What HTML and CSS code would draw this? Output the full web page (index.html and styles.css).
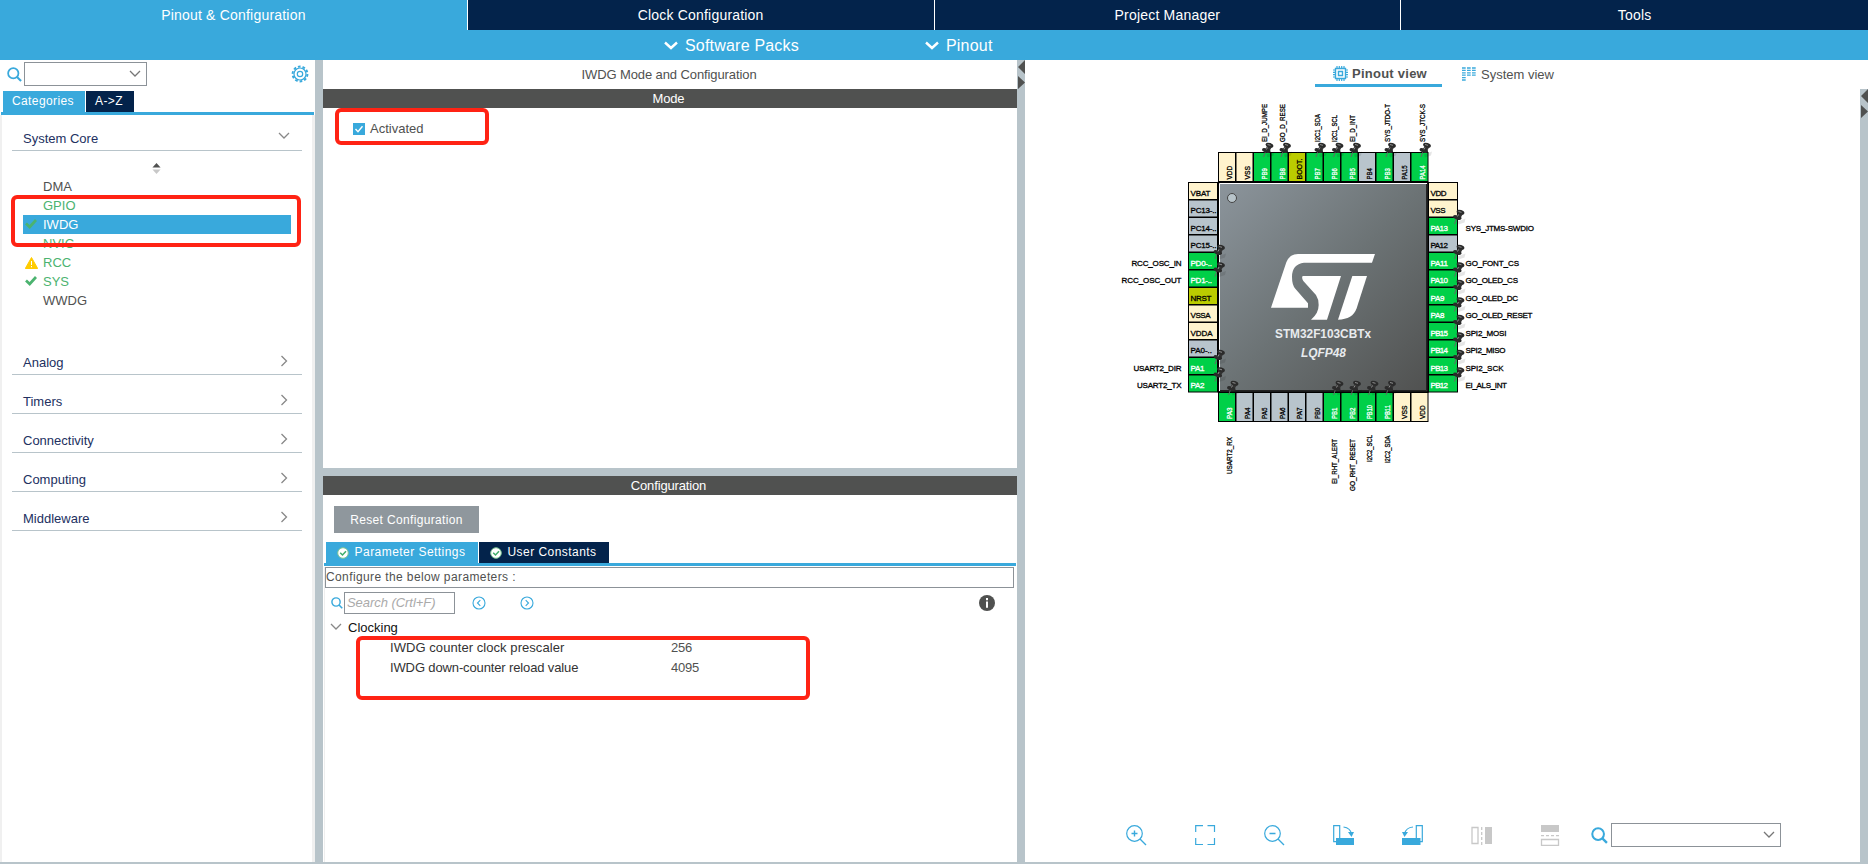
FILE: index.html
```html
<!DOCTYPE html>
<html lang="en">
<head>
<meta charset="utf-8">
<title>Pinout &amp; Configuration</title>
<link rel="stylesheet" href="styles.css">
</head>
<body>
<svg class="defs" width="0" height="0" aria-hidden="true">
  <symbol id="down" viewBox="0 0 12 8"><path d="M1 1l5 5 5-5" fill="none" stroke="currentColor" stroke-width="1.3"/></symbol>
  <symbol id="bold-down" viewBox="0 0 14 9"><path d="M1 1.5l6 5.5 6-5.5" fill="none" stroke="currentColor" stroke-width="2.4"/></symbol>
  <symbol id="right" viewBox="0 0 8 12"><path d="M1.500 1l5 5-5 5" fill="none" stroke="currentColor" stroke-width="1.3"/></symbol>
  <symbol id="search" viewBox="0 0 16 16"><circle cx="6.700" cy="6.700" r="5.500" fill="none" stroke="currentColor" stroke-width="1.900"/><path d="M10.700 10.700L15 15" stroke="currentColor" stroke-width="2.200"/></symbol>
  <symbol id="check" viewBox="0 0 12 10"><path d="M1 4.500l3.700 3.500L11 1" fill="none" stroke="currentColor" stroke-width="2.700"/></symbol>
  <symbol id="ok" viewBox="0 0 12 12"><circle cx="6" cy="6" r="5.300" fill="#fff" stroke="#7cc693" stroke-width="1"/><path d="M3.200 5.700l2.300 2.300 3.500-3.800" fill="none" stroke="#3fae6b" stroke-width="1.500"/></symbol>
  <symbol id="split" viewBox="0 0 8 30"><path d="M8 0v14L1 7zM1 16l7 6.500L1 29z" fill="#505150"/></symbol>
</svg>

<nav class="main-tabs">
  <div class="main-tab active">Pinout &amp; Configuration</div>
  <div class="main-tab">Clock Configuration</div>
  <div class="main-tab">Project Manager</div>
  <div class="main-tab">Tools</div>
</nav>
<div class="menu-bar">
  <span class="menu"><svg width="14" height="9"><use href="#bold-down"/></svg>Software Packs</span>
  <span class="menu"><svg width="14" height="9"><use href="#bold-down"/></svg>Pinout</span>
</div>

<main class="workspace">
  <aside class="sidebar">
    <div class="side-search">
      <svg class="blue" width="15" height="15"><use href="#search"/></svg>
      <div class="combo"><svg width="12" height="8"><use href="#down"/></svg></div>
      <svg class="gear" width="18" height="18" viewBox="-9 -9 18 18"><circle r="7.400" stroke-width="2" stroke-dasharray="2.650 2"/><circle r="6"/><circle r="2.700"/></svg>
    </div>
    <div class="side-tabs"><span class="tab cat">Categories</span><span class="tab az dark">A-&gt;Z</span></div>
    <div class="side-body">
      <div class="group first"><span>System Core</span><svg class="grey" width="12" height="8"><use href="#down"/></svg></div>
      <svg class="sorter" width="9" height="11" viewBox="0 0 10 12"><path d="M5 0l4.500 5h-9z" fill="#505150"/><path d="M5 12L.5 7h9z" fill="#c8c8c8"/></svg>
      <ul class="items">
        <li>DMA</li>
        <li class="on">GPIO</li>
        <li class="selected"><svg class="mark" width="12" height="10"><use href="#check"/></svg>IWDG</li>
        <li class="on">NVIC</li>
        <li class="on"><svg class="mark" width="13" height="12" viewBox="0 0 13 12"><path d="M6.500.5l6.200 11H.3z" fill="#fc0" stroke="#fc0" stroke-linejoin="round"/><path d="M6.500 4v4M6.500 9v1.300" stroke="#fff"/></svg>RCC</li>
        <li class="on"><svg class="mark" width="12" height="10"><use href="#check"/></svg>SYS</li>
        <li>WWDG</li>
      </ul>
      <div class="group"><span>Analog</span><svg class="grey" width="8" height="12"><use href="#right"/></svg></div>
      <div class="group"><span>Timers</span><svg class="grey" width="8" height="12"><use href="#right"/></svg></div>
      <div class="group"><span>Connectivity</span><svg class="grey" width="8" height="12"><use href="#right"/></svg></div>
      <div class="group"><span>Computing</span><svg class="grey" width="8" height="12"><use href="#right"/></svg></div>
      <div class="group"><span>Middleware</span><svg class="grey" width="8" height="12"><use href="#right"/></svg></div>
    </div>
  </aside>
  <div class="splitter"></div>

  <section class="center">
    <div class="mode-panel">
      <h1 class="title">IWDG Mode and Configuration</h1>
      <h2 class="strip">Mode</h2>
      <label class="activated"><svg width="12" height="12" viewBox="0 0 12 12"><path d="M0 0h12v12H0z" fill="#39a9dc"/><path d="M2.500 6l2.500 2.700 4.500-5.400" fill="none" stroke="#fff" stroke-width="1.400"/></svg>Activated</label>
    </div>
    <div class="config-panel">
      <h2 class="strip">Configuration</h2>
      <button class="reset">Reset Configuration</button>
      <div class="config-tabs">
        <span class="tab params"><svg width="12" height="12"><use href="#ok"/></svg>Parameter Settings</span>
        <span class="tab consts dark"><svg width="12" height="12"><use href="#ok"/></svg>User Constants</span>
      </div>
      <div class="config-body">
        <p class="hint">Configure the below parameters :</p>
        <div class="param-search">
          <svg class="blue" width="12" height="12"><use href="#search"/></svg>
          <div class="field">Search (Crtl+F)</div>
          <svg class="step prev" width="14" height="14" viewBox="0 0 14 14"><circle cx="7" cy="7" r="6"/><path d="M8.300 4.200L5.500 7l2.800 2.800"/></svg>
          <svg class="step next" width="14" height="14" viewBox="0 0 14 14"><circle cx="7" cy="7" r="6"/><path d="M5.700 4.200L8.500 7 5.700 9.800"/></svg>
          <svg class="info" width="16" height="16" viewBox="0 0 16 16"><circle cx="8" cy="8" r="8" fill="#505150"/><path d="M8 6.500V12.800M8 3v2.200" fill="none" stroke="#fff" stroke-width="2"/></svg>
        </div>
        <div class="branch"><svg class="grey" width="12" height="8"><use href="#down"/></svg>Clocking</div>
        <div class="param wide"><span>IWDG counter clock prescaler</span><b>256</b></div>
        <div class="param tight"><span>IWDG down-counter reload value</span><b>4095</b></div>
      </div>
    </div>
  </section>
  <div class="splitter"><svg class="arrows" width="8" height="30"><use href="#split"/></svg></div>

  <section class="pinout">
    <div class="view-tabs">
      <span class="view current"><svg width="15" height="15" viewBox="0 0 15 15" fill="none" stroke="#39a9dc"><path d="M2.500 2.500h10v10h-10zM5.500 5.500h4v4h-4z" stroke-width="1.400"/><path d="M4 0v2M6.300 0v2M8.700 0v2M11 0v2M4 13v2M6.300 13v2M8.700 13v2M11 13v2M0 4h2M0 6.300h2M0 8.700h2M0 11h2M13 4h2M13 6.300h2M13 8.700h2M13 11h2" stroke-width="1.200"/></svg>Pinout view</span>
      <span class="view"><svg width="14" height="14" viewBox="0 0 14 14" stroke="#39a9dc" stroke-width="1.300" stroke-dasharray="3.700 1.300"><path d="M0 1h14M0 3.400h14M0 5.800h14M0 8.200h14M0 10.600h4M0 13h4"/></svg>System view</span>
    </div>
    <div class="canvas-row">
      <div class="canvas">
        <svg id="chip" class="chip" viewBox="1025 89 835 711" width="835" height="711"></svg>
        <div class="tools">
          <svg width="21" height="21" viewBox="0 0 21 21"><circle cx="8.500" cy="8.500" r="7.800"/><path d="M14 14l6 6M5.500 8.500h6M8.500 5.500v6" stroke-width="1.400"/></svg>
          <svg width="21" height="21" viewBox="0 0 21 21"><path d="M.7 7V.7H8M12.500.7h7V7M19.500 13v6.500h-7M8 19.500H.7V13"/></svg>
          <svg width="21" height="21" viewBox="0 0 21 21"><circle cx="8.500" cy="8.500" r="7.800"/><path d="M14 14l6 6M5.500 8.500h6" stroke-width="1.400"/></svg>
          <svg width="21" height="21" viewBox="0 0 21 21"><path d="M.7.7h6v16h-6zM10.500 2q7 1 8 7"/><path d="M3 13h18v7H3z" fill="#39a9dc" stroke="none"/><path d="M15 7h6l-2.500 5z" fill="#39a9dc" stroke="none"/></svg>
          <svg width="21" height="21" viewBox="0 0 21 21"><path d="M14.300.7h6v16h-6zM11 2Q4 2.500 2.500 9"/><path d="M0 13h18.500v7H0z" fill="#39a9dc" stroke="none"/><path d="M0 7h6l-3.500 5z" fill="#39a9dc" stroke="none"/></svg>
          <svg class="off" width="21" height="21" viewBox="0 0 21 21"><path d="M1 2.500h6v16H1z"/><path d="M10.700 2v18" stroke-dasharray="3 2"/><path d="M14 2h7v17h-7z" fill="#c8c8c8" stroke="none"/></svg>
          <svg class="off" width="21" height="21" viewBox="0 0 21 21"><path d="M1 0h18v7H1z" fill="#c8c8c8" stroke="none"/><path d="M1 10.700h18" stroke-dasharray="3 2"/><path d="M1.500 14.500h17v6h-17z"/></svg>
          <svg class="blue" width="17" height="17"><use href="#search"/></svg>
          <div class="combo"><svg width="12" height="8"><use href="#down"/></svg></div>
        </div>
      </div>
      <div class="splitter"><svg class="arrows" width="8" height="30"><use href="#split"/></svg></div>
    </div>
  </section>
</main>
<div class="callout c1"></div>
<div class="callout c2"></div>
<div class="callout c3"></div>
<script src="chip.js"></script>
</body>
</html>
```
FILE: styles.css
```css
* { box-sizing: border-box; }
body { margin: 0; width: 1868px; height: 864px; overflow: hidden; display: flex; flex-direction: column; background: #fff; color: #505150; font: 13px/19px "Liberation Sans", Arial, sans-serif; position: relative; border-bottom: 2px solid #b8c4ca; }
svg { display: block; flex: none; }
.defs { position: absolute; }
h1, h2, p, ul { margin: 0; padding: 0; font: inherit; }
.blue { color: #39a9dc; }
.grey { color: #888; }

.main-tabs { display: flex; height: 30px; flex: none; background: #03234b; }
.main-tab { width: 467px; border-right: 1px solid #fff; color: #fff; font-size: 14px; line-height: 30px; letter-spacing: .2px; text-align: center; }
.main-tab:last-child { border: 0; }
.main-tab.active { width: 468px; background: #39a9dc; }
.menu-bar { display: flex; gap: 126px; height: 30px; flex: none; padding-left: 664px; background: #39a9dc; }
.menu { display: flex; align-items: center; gap: 7px; color: #fff; font-size: 16px; letter-spacing: .2px; }

.workspace { display: flex; flex: 1; min-height: 0; }
.splitter { width: 8px; flex: none; background: #b8c4ca; }
.combo { display: flex; align-items: center; justify-content: flex-end; height: 24px; border: 1px solid #8c9298; background: #fff; color: #777; padding-right: 5px; }

.sidebar { width: 315px; flex: none; display: flex; flex-direction: column; }
.side-search { display: flex; align-items: center; height: 31px; padding: 2px 6px 5px 7px; }
.side-search .combo { width: 123px; margin-left: 2px; }
.gear { margin-left: auto; fill: none; stroke: #39a9dc; stroke-width: 1.2; }
.side-tabs, .config-tabs { display: flex; gap: 1px; border-bottom: 3px solid #39a9dc; height: 24px; }
.side-tabs { margin: 0 1px; padding-left: 2px; }
.tab { display: flex; align-items: center; justify-content: center; height: 21px; background: #39a9dc; color: #fff; font-size: 12px; letter-spacing: .4px; }
.dark { background: #03234b; }
.cat { width: 82px; padding-right: 2px; }
.az { width: 48px; padding-right: 2px; }
.side-body { flex: 1; border: solid #f0f0f0; border-width: 0 3px 0 2px; padding: 0 10px; }
.group { display: flex; justify-content: space-between; align-items: center; height: 39px; padding: 14px 14px 0 11px; border-bottom: 1px solid #b8c4ca; color: #22305f; }
.group svg { margin-top: -2px; }
.group.first { height: 36px; padding: 11px 12px 0 11px; }
.group.first svg { margin-top: -5px; }
.sorter { margin: 12px 0 3px 140px; }
.items { list-style: none; margin-bottom: 26px; }
.items li { position: relative; height: 19px; margin: 0 11px; padding-left: 20px; }
.items .on { color: #4bb36f; }
.items .selected { background: #39a9dc; color: #fff; }
.mark { position: absolute; left: 2px; top: 4px; color: #4bb36f; }

.center { width: 694px; flex: none; display: flex; flex-direction: column; }
.mode-panel { height: 416px; flex: none; border-bottom: 8px solid #b8c4ca; }
.title { height: 29px; line-height: 29px; padding-right: 2px; text-align: center; letter-spacing: -.1px; }
.strip { height: 19px; padding-right: 3px; background: #505150; color: #fff; text-align: center; letter-spacing: -.15px; }
.activated { display: flex; align-items: center; gap: 5px; padding: 11px 0 0 30px; }
.config-panel { flex: 1; display: flex; flex-direction: column; align-items: stretch; }
.reset { width: 145px; height: 27px; margin: 11px 0 9px 11px; border: 0; padding: 0; background: #8f979d; color: #fff; font: 12px "Liberation Sans", Arial, sans-serif; letter-spacing: .35px; }
.config-tabs { margin: 0 1px; padding-left: 2px; }
.config-tabs .tab { gap: 6px; padding-right: 2px; letter-spacing: .45px; }
.params { width: 152px; }
.consts { width: 130px; }
.config-body { flex: 1; margin: 1px 3px 0 1px; border-left: 1px solid #eee; }
.hint { height: 21px; border: 1px solid #8c9298; font-size: 12px; letter-spacing: .39px; }
.param-search { display: flex; align-items: center; padding: 4px 19px 0 6px; }
.field { width: 111px; height: 22px; margin-left: 1px; padding-left: 2px; border: 1px solid #8c9298; color: #aaa; font-style: italic; line-height: 20px; letter-spacing: -.05px; }
.step { fill: none; stroke: #39a9dc; stroke-width: 1.1; }
.prev { margin-left: 17px; }
.next { margin-left: 34px; }
.info { margin-left: auto; }
.branch { display: flex; align-items: center; gap: 6px; height: 24px; padding-left: 5px; padding-top: 2px; color: #111; }
.param { display: flex; height: 20px; padding-left: 65px; color: #333; }
.param span { width: 281px; }
.wide span { letter-spacing: .06px; }
.tight span { letter-spacing: -.13px; }
.param b { font-weight: normal; color: #505150; letter-spacing: -.2px; }

.pinout { flex: 1; display: flex; flex-direction: column; }
.view-tabs { display: flex; height: 29px; padding-left: 290px; }
.view { display: flex; align-items: center; gap: 5px; height: 27px; padding: 1px 0 0 20px; }
.current { width: 127px; padding: 3px 0 0 18px; gap: 4px; border-bottom: 3px solid #39a9dc; font-weight: bold; letter-spacing: .25px; }
.canvas-row { flex: 1; display: flex; min-height: 0; }
.canvas { width: 835px; }
.tools { display: flex; align-items: center; gap: 48px; padding: 23px 0 0 101px; }
.tools > svg { fill: none; stroke: #39a9dc; stroke-width: 1.2; }
.tools > .off { stroke: #c8c8c8; stroke-width: 1.3; }
.tools > .blue { margin-left: -18px; stroke: none; }
.tools .combo { width: 170px; margin-left: -45px; }

.callout { position: absolute; border: 4px solid #ff2314; border-radius: 6px; }
.c1 { left: 11px; top: 195px; width: 290px; height: 52px; }
.c2 { left: 335px; top: 108px; width: 154px; height: 37px; }
.c3 { left: 356px; top: 636px; width: 454px; height: 64px; }

.pin-text { font: 8px "Liberation Sans", Arial, sans-serif; stroke-width: .3px; }
.part { font: bold 12.5px "Liberation Sans", Arial, sans-serif; fill: #e8ebee; }
.package { font-style: italic; }
```
FILE: chip.js
```js
// Each pin: [name, kind, signal label, label width, label start]
// Kinds: g = assigned, n = free, p = power, r = reset/boot
const sides = {
  left: [['VBAT','p'],['PC13-..','n'],['PC14-..','n'],['PC15-..','n'],['PD0-..','g','RCC_OSC_IN',50],['PD1-..','g','RCC_OSC_OUT',60],['NRST','r'],['VSSA','p'],['VDDA','p'],['PA0-..','n'],['PA1','g','USART2_DIR',48],['PA2','g','USART2_TX',44.5]],
  right: [['VDD','p'],['VSS','p'],['PA13','g','SYS_JTMS-SWDIO',68.5],['PA12','n'],['PA11','g','GO_FONT_CS',53.5],['PA10','g','GO_OLED_CS',52.5],['PA9','g','GO_OLED_DC',52.5],['PA8','g','GO_OLED_RESET',67],['PB15','g','SPI2_MOSI',41],['PB14','g','SPI2_MISO',40],['PB13','g','SPI2_SCK',38],['PB12','g','EI_ALS_INT',41.5]],
  top: [['VDD','p'],['VSS','p'],['PB9','g','EI_D_JUMPE',38],['PB8','g','GO_D_RESE',38],['BOOT.','r'],['PB7','g','I2C1_SDA',28],['PB6','g','I2C1_SCL',27],['PB5','g','EI_D_INT',27],['PB4','n'],['PB3','g','SYS_JTDO-T',38],['PA15','n'],['PA14','g','SYS_JTCK-S',38]],
  bottom: [['PA3','g','USART2_RX',37,474],['PA4','n'],['PA5','n'],['PA6','n'],['PA7','n'],['PB0','n'],['PB1','g','EI_RHT_ALERT',45,484],['PB2','g','GO_RHT_RESET',52,491],['PB10','g','I2C2_SCL',27,462],['PB11','g','I2C2_SDA',27.5,463],['VSS','p'],['VDD','p']]
};
const fill = { g: '#00d048', n: '#b8c4cc', p: '#fff3cd', r: '#bbcc00' };
const nameWidths = { 'VBAT': 20, 'NRST': 21, 'VSSA': 20, 'VDDA': 22, 'VDD': 16, 'VSS': 15 };
const step = 17.5;
const tack = (x, y) => `<g transform="translate(${x} ${y})"><path d="M5 12l8-3-1 4-6 2z" opacity=".1"/><path d="M4 9L2 14.500" stroke="#666" stroke-width="1"/><path d="M5.500 3.500L3.500 8l4 1.500L10 5z" fill="#333"/><ellipse cx="8" cy="2.800" rx="4" ry="2.300" transform="rotate(18 8 2.800)" fill="#2b2b2b"/><ellipse cx="4.800" cy="8" rx="4.400" ry="2" transform="rotate(18 4.800 8)" fill="#2b2b2b"/><path d="M6 2l3 .8M6 5L5 7" stroke="#999" stroke-width=".9"/></g>`;
const text = (s, x, y, w, color, vertical, anchor) =>
  `<text class="pin-text" ${vertical ? `transform="translate(${x} ${y}) rotate(-90)"` : `x="${x}" y="${y}"`} textLength="${w}" lengthAdjust="${vertical ? 'spacingAndGlyphs' : 'spacing'}" fill="${color}" stroke="${color}" text-anchor="${anchor || 'start'}">${s}</text>`;

let boxes = '', labels = '', tacks = '';
for (const [side, pins] of Object.entries(sides)) {
  pins.forEach(([name, kind, signal, width, start], i) => {
    const vertical = side === 'top' || side === 'bottom';
    const x = side === 'left' ? 1188.5 : side === 'right' ? 1428.5 : 1218.5 + i * step;
    const y = side === 'top' ? 152.500 : side === 'bottom' ? 392.500 : 182.500 + i * step;
    boxes += `<rect x="${x}" y="${y}" width="${vertical ? 17 : 29}" height="${vertical ? 29 : 17}" fill="${fill[kind]}" stroke="#000"/>`;
    const ink = kind === 'g' ? '#fff' : '#000';
    if (vertical) {
      const w = name.length === 3 ? (name[0] === 'V' ? 13.5 : 11.5) : name.length === 4 ? 14 : 21;
      labels += text(name, x + 13.6, side === 'top' ? 179.5 : 419, w, ink, true);
      if (signal) {
        labels += text(signal, x + 13.6, side === 'top' ? 142 : start, width, '#000', true);
        tacks += tack(x + 8, side === 'top' ? 142.5 : 380.5);
      }
    } else {
      const w = nameWidths[name] || (name.endsWith('.') ? (name.length === 7 ? 26 : 21.5) : name.length === 3 ? 14 : 17.5);
      labels += text(name, x + 2, y + 13.2, w, ink, false);
      if (signal) {
        labels += side === 'left' ? text(signal, 1181.5, y + 13.2, width, '#000', false, 'end') : text(signal, 1465.5, y + 13.2, width, '#000', false);
        tacks += tack(side === 'left' ? 1213 : 1452.5, y - 8);
      }
    }
  });
}
document.getElementById('chip').innerHTML = `
<defs><linearGradient id="body" x1="0" y1="0" x2="1" y2="1"><stop offset="0" stop-color="#8c959c"/><stop offset=".5" stop-color="#6c7375"/><stop offset="1" stop-color="#505150"/></linearGradient></defs>
${boxes}
<rect x="1218.500" y="182.500" width="209.500" height="209.500" fill="url(#body)" stroke="#000" stroke-width="1.500"/>
<path d="M1219.500 391V183.500H1427" fill="none" stroke="#fff"/><path d="M1426.500 184v206.500H1220" fill="none" stroke="#222"/>
<circle cx="1232" cy="198" r="4.500" fill="#b8c4ca" stroke="#444"/>
<g fill="#fff" transform="translate(1260 245) scale(.3333)"><path d="M33 188L79 52Q89 27 114 27H345l-9 26H132Q96 58 96 95 96 120 106 131L144 175v13z"/><path d="M128 93H243L201 224H153Q176 205 176 180 176 162 168 150L130 108Q124 98 128 93z"/><path d="M277 93h44L290 190Q278 224 234 224z"/></g>
<text class="part" x="1275" y="337.700" textLength="96" lengthAdjust="spacingAndGlyphs">STM32F103CBTx</text>
<text class="part package" x="1301" y="357" textLength="45" lengthAdjust="spacingAndGlyphs">LQFP48</text>
${labels}${tacks}`;
```
